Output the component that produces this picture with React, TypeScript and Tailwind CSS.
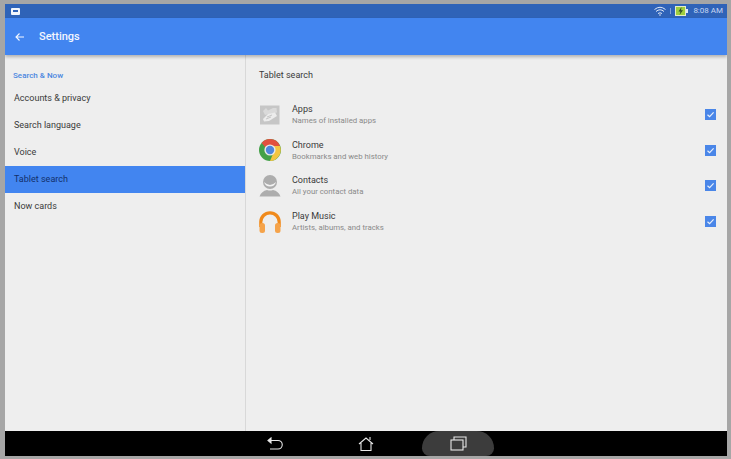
const font = { fontFamily: "Roboto, sans-serif" };

const navItems = ["Accounts & privacy", "Search language", "Voice", "Tablet search", "Now cards"];

function AppsIcon() {
  return (
    <svg width="24" height="24" viewBox="0 0 24 24">
      <rect x="2" y="2.5" width="19.5" height="19" fill="#c6c6c6" />
      <path d="M5 8 L8 5 L10 7.5 L15 5 L18.5 5 L19 9.5 L7 12 Z" fill="#dadada" />
      <path d="M5 16 L10 11 L17 9.5 L19 13 L11 18 L6 18.5 Z" fill="#ececec" />
      <path d="M9 14 L14 12 M8 16 L13 14" stroke="#c6c6c6" strokeWidth="1" />
    </svg>
  );
}

function ChromeIcon() {
  return (
    <svg width="24" height="24" viewBox="0 0 24 24">
      <circle cx="12" cy="12" r="11" fill="#43a047" />
      <path d="M12 1 A11 11 0 0 1 22 8 L12 8 A4 4 0 0 0 8 10 L3.6 5 A11 11 0 0 1 12 1 Z" fill="#e2503f" />
      <path d="M22 8 A11 11 0 0 1 12 23 L16 13.5 A4 4 0 0 0 12 8 Z" fill="#f4c542" />
      <circle cx="12" cy="12" r="5.6" fill="#e8e8e8" />
      <circle cx="12" cy="12" r="4.2" fill="#4f86dc" />
    </svg>
  );
}

function ContactIcon() {
  return (
    <svg width="24" height="24" viewBox="0 0 24 24">
      <circle cx="12" cy="8" r="7" fill="#adadad" />
      <path d="M6 8 Q12 14 18 8 Q16.5 12.5 12 12.5 Q7.5 12.5 6 8 Z" fill="#f4f4f4" />
      <path d="M1.5 22.5 Q3.5 17 9 16 Q12 17 15 16 Q20.5 17 22.5 22.5 Z" fill="#adadad" />
    </svg>
  );
}

function MusicIcon() {
  return (
    <svg width="24" height="24" viewBox="0 0 24 24">
      <path d="M2.8 17 L2.8 12 A9.2 9.2 0 0 1 21.2 12 L21.2 17" fill="none" stroke="#f08a1c" strokeWidth="3.2" />
      <rect x="1.5" y="13" width="5.5" height="10" rx="2.5" fill="#f5a34a" />
      <rect x="17" y="13" width="5.5" height="10" rx="2.5" fill="#f5a34a" />
    </svg>
  );
}

const rows = [
  { title: "Apps", sub: "Names of installed apps", icon: <AppsIcon /> },
  { title: "Chrome", sub: "Bookmarks and web history", icon: <ChromeIcon /> },
  { title: "Contacts", sub: "All your contact data", icon: <ContactIcon /> },
  { title: "Play Music", sub: "Artists, albums, and tracks", icon: <MusicIcon /> },
];

function Check() {
  return (
    <div className="flex h-[11px] w-[11px] items-center justify-center bg-[#4a86e8]">
      <svg width="9" height="9" viewBox="0 0 9 9">
        <path d="M1.5 4.7 L3.6 6.6 L7.6 2.4" fill="none" stroke="#e6effc" strokeWidth="1.2" />
      </svg>
    </div>
  );
}

export default function App() {
  return (
    <div
      className="flex h-[459px] w-[731px] flex-col overflow-hidden border-t-[4px] border-r-[4px] border-b-[3px] border-l-[5px] border-[#a6a6a6] bg-[#eeeeee]"
      style={font}
    >
      {/* status bar */}
      <div className="flex h-[14px] shrink-0 items-center justify-between bg-[#2f63b8] pr-[4px] pl-[6px]">
        <svg width="9" height="7" viewBox="0 0 9 7">
          <rect x="0" y="0" width="9" height="7" rx="1" fill="#f2f6fc" />
          <rect x="2" y="2" width="5" height="2" fill="#2f63b8" />
        </svg>
        <div className="flex items-center">
          <svg width="12" height="10" viewBox="0 0 12 10" fill="none" stroke="#dfe8f7" strokeWidth="1">
            <path d="M0.5 3.5 Q6 -1 11.5 3.5" />
            <path d="M2 5.5 Q6 2 10 5.5" />
            <path d="M4 7.5 Q6 6 8 7.5" />
            <circle cx="6" cy="9" r="0.8" fill="#dfe8f7" stroke="none" />
          </svg>
          <div className="mx-[4px] h-[6px] w-px bg-[#7f9fd8]" />
          <svg width="13" height="10" viewBox="0 0 13 10">
            <rect x="0" y="0" width="11" height="10" fill="#e6edc8" />
            <rect x="1" y="1" width="9" height="8" fill="#9fce3f" />
            <rect x="11" y="3" width="2" height="4" fill="#dfe8f7" />
            <path d="M6.5 1 L3.5 5.5 L5.5 5.5 L4.5 9 L8 4.2 L6 4.2 Z" fill="#2f4f2a" />
          </svg>
          <span className="ml-[5px] text-[8px] leading-none text-[#c8d8f2]">8:08 AM</span>
        </div>
      </div>

      {/* action bar */}
      <div className="z-10 flex h-[37px] shrink-0 items-center bg-[#4285f0] pl-[10px] shadow-[0_2px_3px_rgba(0,0,0,0.25)]">
        <svg width="10" height="10" viewBox="0 0 10 10" fill="none" stroke="#f4f8ff" strokeWidth="1.1">
          <path d="M9 5 L1 5 M4.5 1.5 L1 5 L4.5 8.5" />
        </svg>
        <span className="ml-[14px] pt-[1px] text-[11px] font-medium text-[#f2f6fe]">Settings</span>
      </div>

      {/* content */}
      <div className="flex min-h-0 flex-1">
        <div className="w-[241px] shrink-0 border-r border-[#d8d8d8] pt-[14px]">
          <div className="mb-[3px] flex h-[13px] items-center pl-[8px] text-[8px] font-medium text-[#4a86e0]">Search &amp; Now</div>
          {navItems.map((item) => (
            <div
              key={item}
              className={
                item === "Tablet search"
                  ? "flex h-[27px] items-center bg-[#4285f0] pt-[1px] pl-[9px] text-[9px] text-[#12306b]"
                  : "flex h-[27px] items-center pt-[1px] pl-[9px] text-[9px] text-[#3a3a3a]"
              }
            >
              {item}
            </div>
          ))}
        </div>

        <div className="min-w-0 flex-1 pt-[14px]">
          <div className="mb-[15px] flex h-[13px] items-center pt-[1px] pl-[13px] text-[9px] text-[#3a3a3a]">Tablet search</div>
          {rows.map((row) => (
            <div key={row.title} className="flex h-[35.6px] items-center pr-[11px] pl-[12px]">
              <div className="w-[24px] shrink-0">{row.icon}</div>
              <div className="ml-[10px] flex-1 pt-[1px]">
                <div className="text-[9px] leading-[12px] text-[#3a3a3a]">{row.title}</div>
                <div className="text-[7.8px] leading-[12px] text-[#8a8a8a]">{row.sub}</div>
              </div>
              <Check />
            </div>
          ))}
        </div>
      </div>

      {/* navigation bar */}
      <div className="flex h-[25px] shrink-0 items-center bg-black pl-[262px]">
        <svg width="16" height="14" viewBox="0 0 16 14" fill="none" stroke="#e8e8e8" strokeWidth="1.1">
          <path d="M3 3.5 L11 3.5 A4 4 0 0 1 11 12 L3 12" />
          <path d="M4 1 L1 3.5 L4 6 Z" fill="#e8e8e8" />
        </svg>
        <svg className="ml-[75px]" width="16" height="16" viewBox="0 0 16 16" fill="none" stroke="#e8e8e8" strokeWidth="1.1">
          <path d="M1 8 L8 2 L15 8 M3 7 L3 14.5 L13 14.5 L13 7 M12 1 L12 4" />
        </svg>
        <div className="ml-[48px] flex h-[25px] w-[72px] items-center justify-center rounded-t-[22px] rounded-b-[10px] bg-[#3c3c3c]">
          <svg width="17" height="15" viewBox="0 0 17 15" fill="none" stroke="#e8e8e8" strokeWidth="1.1">
            <rect x="1" y="4" width="12" height="10" />
            <path d="M4 4 L4 1 L16 1 L16 11 L13 11" />
          </svg>
        </div>
      </div>
    </div>
  );
}
